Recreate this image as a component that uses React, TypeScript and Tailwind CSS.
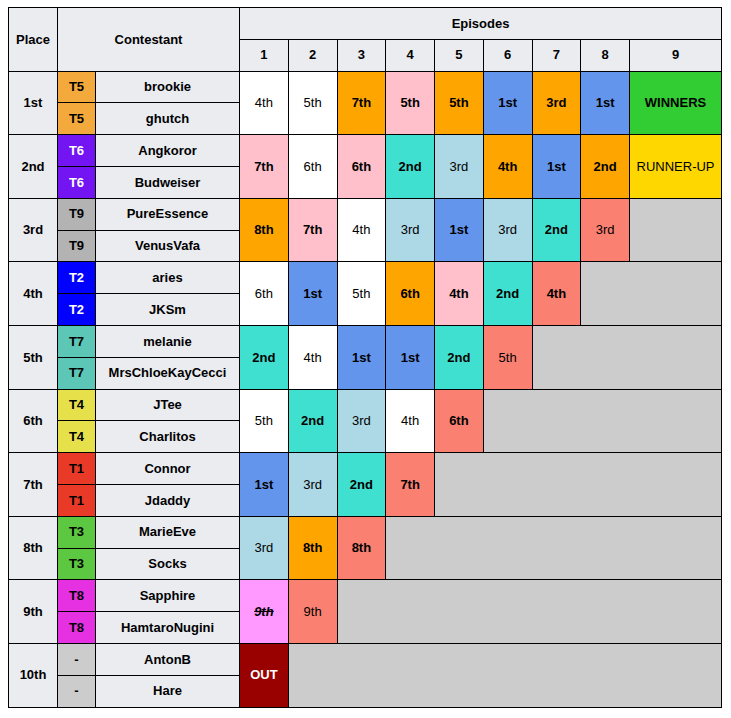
type Cell = { t: string; bg: string; b?: boolean; fg?: string; style?: string };

interface Row {
  place: string;
  team: string;
  teamBg: string;
  teamFg: string;
  names: [string, string];
  cells: Cell[];
}

const W = 'bg-white';
const OR = 'bg-[#ffa500]';
const PK = 'bg-[#ffc0cb]';
const BL = 'bg-[#6495ed]';
const TQ = 'bg-[#40e0d0]';
const LB = 'bg-[#add8e6]';
const SA = 'bg-[#fa8072]';

const rows: Row[] = [
  {
    place: '1st', team: 'T5', teamBg: 'bg-[#f3a93c]', teamFg: 'text-black', names: ['brookie', 'ghutch'],
    cells: [
      { t: '4th', bg: W }, { t: '5th', bg: W }, { t: '7th', bg: OR, b: true }, { t: '5th', bg: PK, b: true },
      { t: '5th', bg: OR, b: true }, { t: '1st', bg: BL, b: true }, { t: '3rd', bg: OR, b: true },
      { t: '1st', bg: BL, b: true }, { t: 'WINNERS', bg: 'bg-[#32cd32]', b: true },
    ],
  },
  {
    place: '2nd', team: 'T6', teamBg: 'bg-[#7314f2]', teamFg: 'text-white', names: ['Angkoror', 'Budweiser'],
    cells: [
      { t: '7th', bg: PK, b: true }, { t: '6th', bg: W }, { t: '6th', bg: PK, b: true }, { t: '2nd', bg: TQ, b: true },
      { t: '3rd', bg: LB }, { t: '4th', bg: OR, b: true }, { t: '1st', bg: BL, b: true },
      { t: '2nd', bg: OR, b: true }, { t: 'RUNNER-UP', bg: 'bg-[#ffd700]' },
    ],
  },
  {
    place: '3rd', team: 'T9', teamBg: 'bg-[#b3b3b3]', teamFg: 'text-black', names: ['PureEssence', 'VenusVafa'],
    cells: [
      { t: '8th', bg: OR, b: true }, { t: '7th', bg: PK, b: true }, { t: '4th', bg: W }, { t: '3rd', bg: LB },
      { t: '1st', bg: BL, b: true }, { t: '3rd', bg: LB }, { t: '2nd', bg: TQ, b: true }, { t: '3rd', bg: SA },
    ],
  },
  {
    place: '4th', team: 'T2', teamBg: 'bg-[#0000ff]', teamFg: 'text-white', names: ['aries', 'JKSm'],
    cells: [
      { t: '6th', bg: W }, { t: '1st', bg: BL, b: true }, { t: '5th', bg: W }, { t: '6th', bg: OR, b: true },
      { t: '4th', bg: PK, b: true }, { t: '2nd', bg: TQ, b: true }, { t: '4th', bg: SA, b: true },
    ],
  },
  {
    place: '5th', team: 'T7', teamBg: 'bg-[#5cc6b7]', teamFg: 'text-black', names: ['melanie', 'MrsChloeKayCecci'],
    cells: [
      { t: '2nd', bg: TQ, b: true }, { t: '4th', bg: W }, { t: '1st', bg: BL, b: true }, { t: '1st', bg: BL, b: true },
      { t: '2nd', bg: TQ, b: true }, { t: '5th', bg: SA },
    ],
  },
  {
    place: '6th', team: 'T4', teamBg: 'bg-[#e6e04b]', teamFg: 'text-black', names: ['JTee', 'Charlitos'],
    cells: [
      { t: '5th', bg: W }, { t: '2nd', bg: TQ, b: true }, { t: '3rd', bg: LB }, { t: '4th', bg: W },
      { t: '6th', bg: SA, b: true },
    ],
  },
  {
    place: '7th', team: 'T1', teamBg: 'bg-[#e83a27]', teamFg: 'text-black', names: ['Connor', 'Jdaddy'],
    cells: [
      { t: '1st', bg: BL, b: true }, { t: '3rd', bg: LB }, { t: '2nd', bg: TQ, b: true }, { t: '7th', bg: SA, b: true },
    ],
  },
  {
    place: '8th', team: 'T3', teamBg: 'bg-[#5cc841]', teamFg: 'text-black', names: ['MarieEve', 'Socks'],
    cells: [{ t: '3rd', bg: LB }, { t: '8th', bg: OR, b: true }, { t: '8th', bg: SA, b: true }],
  },
  {
    place: '9th', team: 'T8', teamBg: 'bg-[#e631e3]', teamFg: 'text-black', names: ['Sapphire', 'HamtaroNugini'],
    cells: [{ t: '9th', bg: 'bg-[#ff99ff]', b: true, style: 'italic line-through' }, { t: '9th', bg: SA }],
  },
  {
    place: '10th', team: '-', teamBg: 'bg-[#cccccc]', teamFg: 'text-black', names: ['AntonB', 'Hare'],
    cells: [{ t: 'OUT', bg: 'bg-[#990000]', b: true, fg: 'text-white' }],
  },
];

const bd = 'border border-black';

export default function App() {
  return (
    <div className="pt-[7px] pl-[8px] bg-white min-h-screen font-['Liberation_Sans',Arial,sans-serif] text-[13px] text-black">
      <table className="border-collapse table-fixed w-[713px] text-center">
        <colgroup>
          <col className="w-[49px]" />
          <col className="w-[38px]" />
          <col className="w-[144px]" />
          {[1, 2, 3, 4, 5, 6, 7, 8].map((n) => (
            <col key={n} className="w-[48.75px]" />
          ))}
          <col className="w-[92px]" />
        </colgroup>
        <thead>
          <tr className="h-[31.8px]">
            <th rowSpan={2} className={`${bd} bg-[#eaecf0] font-bold p-0`}>Place</th>
            <th rowSpan={2} colSpan={2} className={`${bd} bg-[#eaecf0] font-bold p-0`}>Contestant</th>
            <th colSpan={9} className={`${bd} bg-[#eaecf0] font-bold p-0`}>Episodes</th>
          </tr>
          <tr className="h-[31.8px]">
            {[1, 2, 3, 4, 5, 6, 7, 8, 9].map((n) => (
              <th key={n} className={`${bd} bg-[#eaecf0] font-bold p-0`}>{n}</th>
            ))}
          </tr>
        </thead>
        <tbody>
          {rows.map((r) => (
            <Group key={r.place} r={r} />
          ))}
        </tbody>
      </table>
    </div>
  );
}

function Group({ r }: { r: Row }) {
  const fill = 9 - r.cells.length;
  return (
    <>
      <tr className="h-[31.8px]">
        <td rowSpan={2} className={`${bd} bg-[#eaecf0] font-bold p-0`}>{r.place}</td>
        <td className={`${bd} ${r.teamBg} ${r.teamFg} font-bold p-0`}>{r.team}</td>
        <td className={`${bd} bg-[#eaecf0] font-bold p-0 whitespace-nowrap`}>{r.names[0]}</td>
        {r.cells.map((c, i) => (
          <td
            key={i}
            rowSpan={2}
            className={`${bd} ${c.bg} ${c.fg ?? ''} ${c.b ? 'font-bold' : 'font-normal'} ${c.style ?? ''} p-0 whitespace-nowrap`}
          >
            {c.t}
          </td>
        ))}
        {fill > 0 && <td rowSpan={2} colSpan={fill} className={`${bd} bg-[#cccccc] p-0`} />}
      </tr>
      <tr className="h-[31.8px]">
        <td className={`${bd} ${r.teamBg} ${r.teamFg} font-bold p-0`}>{r.team}</td>
        <td className={`${bd} bg-[#eaecf0] font-bold p-0 whitespace-nowrap`}>{r.names[1]}</td>
      </tr>
    </>
  );
}
